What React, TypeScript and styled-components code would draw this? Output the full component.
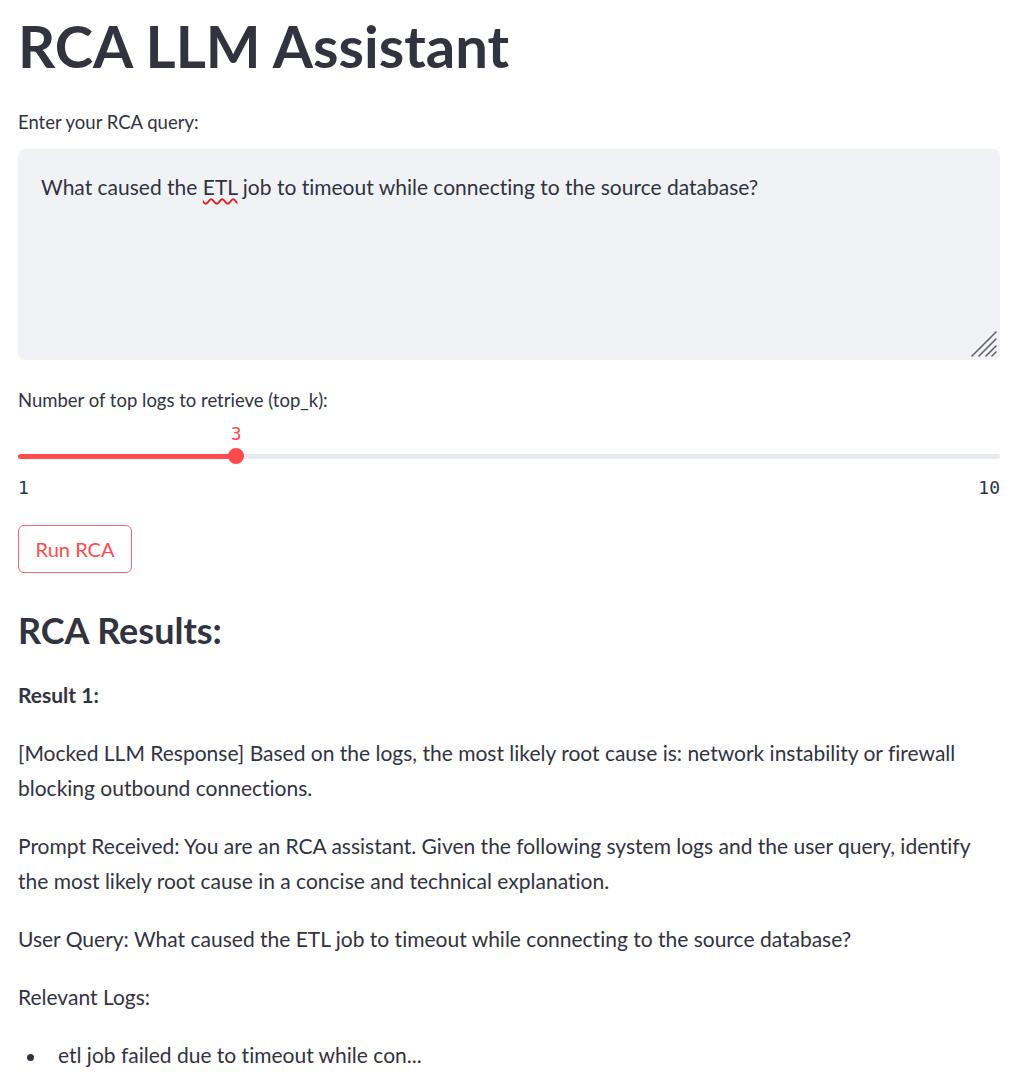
import React from "react";
import styled, { createGlobalStyle } from "styled-components";

const GlobalStyle = createGlobalStyle`
  html, body {
    margin: 0;
    padding: 0;
    background: #ffffff;
  }
  body {
    font-family: "Lato", "Liberation Sans", sans-serif;
    font-variant-ligatures: none;
    font-feature-settings: "liga" 0, "clig" 0;
    color: #31333f;
  }
`;

const Page = styled.main`
  width: 982px;
  padding: 12px 0 0 18px;
  display: flex;
  flex-direction: column;
  align-items: stretch;
`;

const Title = styled.h1`
  margin: 0;
  font-size: 58px;
  line-height: 68px;
  font-weight: 700;
  color: #31333f;
`;

const Field = styled.section<{ $top: number }>`
  display: flex;
  flex-direction: column;
  margin-top: ${(p) => p.$top}px;
`;

const Label = styled.label`
  font-size: 18.5px;
  line-height: 28px;
  color: #31333f;
`;

const TextBox = styled.div`
  position: relative;
  box-sizing: border-box;
  margin-top: 13px;
  height: 211px;
  padding: 21px 23px;
  background: #f0f2f6;
  border-radius: 7px;
  font-size: 21px;
  line-height: 34px;
  color: #31333f;
  outline: none;
`;

const Misspelled = styled.span`
  text-decoration: underline wavy #e0201c;
  text-decoration-thickness: 1.5px;
  text-underline-offset: 3px;
`;

const Grip = styled.svg`
  position: absolute;
  right: 3px;
  bottom: 3px;
  width: 26px;
  height: 26px;
`;

const ValueRow = styled.div`
  position: relative;
  height: 18px;
  margin-top: 11px;
`;

const ThumbValue = styled.span`
  position: absolute;
  top: 0;
  transform: translateX(-50%);
  font-family: "DejaVu Sans Mono", "Liberation Mono", monospace;
  font-size: 18px;
  line-height: 18px;
  color: #ff4b4b;
`;

const TrackArea = styled.div`
  position: relative;
  height: 16px;
  margin-top: 5px;
  display: flex;
  align-items: center;
`;

const Track = styled.div`
  flex: 1;
  height: 5px;
  border-radius: 3px;
  background: #e6e9ef;
  display: flex;
`;

const TrackFill = styled.div`
  height: 100%;
  border-radius: 3px;
  background: #ff4b4b;
`;

const Thumb = styled.div`
  position: absolute;
  top: 0;
  width: 16px;
  height: 16px;
  border-radius: 50%;
  background: #ff4b4b;
  transform: translateX(-50%);
`;

const MinMax = styled.div`
  display: flex;
  justify-content: space-between;
  margin-top: 15px;
  height: 18px;
  font-family: "DejaVu Sans Mono", "Liberation Mono", monospace;
  font-size: 18px;
  line-height: 18px;
  color: #31333f;
`;

const Button = styled.button`
  align-self: flex-start;
  margin-top: 28px;
  box-sizing: border-box;
  width: 114px;
  height: 48px;
  padding: 0;
  display: flex;
  align-items: center;
  justify-content: center;
  background: #ffffff;
  border: 1px solid #f26a6f;
  border-radius: 6px;
  font-family: "Lato", "Liberation Sans", sans-serif;
  font-size: 20px;
  color: #ff4b4b;
  cursor: pointer;
`;

const SectionTitle = styled.h3`
  margin: 36px 0 25px;
  font-size: 36px;
  line-height: 43px;
  font-weight: 700;
  color: #31333f;
`;

const Para = styled.p<{ $bold?: boolean }>`
  margin: 0 0 23px;
  font-size: 21px;
  line-height: 35px;
  font-weight: ${(p) => (p.$bold ? 700 : 400)};
  color: #31333f;
`;

const List = styled.ul`
  margin: 0;
  padding: 0;
  list-style: none;
`;

const Item = styled.li`
  position: relative;
  padding-left: 40px;
  font-size: 21px;
  line-height: 35px;
  color: #31333f;

  &::before {
    content: "";
    position: absolute;
    left: 9px;
    top: 17px;
    width: 7px;
    height: 7px;
    border-radius: 50%;
    background: #31333f;
  }
`;

function Slider({ min, max, value }: { min: number; max: number; value: number }) {
  const pct = ((value - min) / (max - min)) * 100;
  return (
    <>
      <ValueRow>
        <ThumbValue style={{ left: `${pct}%` }}>{value}</ThumbValue>
      </ValueRow>
      <TrackArea>
        <Track>
          <TrackFill style={{ width: `${pct}%` }} />
        </Track>
        <Thumb style={{ left: `${pct}%` }} />
      </TrackArea>
      <MinMax>
        <span>{min}</span>
        <span>{max}</span>
      </MinMax>
    </>
  );
}

export default function App() {
  return (
    <>
      <GlobalStyle />
      <Page>
        <Title>RCA LLM Assistant</Title>

        <Field $top={28}>
          <Label>Enter your RCA query:</Label>
          <TextBox role="textbox" aria-multiline="true" spellCheck={false}>
            What caused the <Misspelled>ETL</Misspelled> job to timeout while connecting to the source database?
            <Grip viewBox="0 0 26 26" aria-hidden="true">
              <g stroke="#5f6068" strokeWidth="1.6" strokeLinecap="round">
                <line x1="1" y1="25" x2="25" y2="1" />
                <line x1="8" y1="25" x2="25" y2="8" />
                <line x1="15" y1="25" x2="25" y2="15" />
                <line x1="21" y1="25" x2="25" y2="21" />
              </g>
            </Grip>
          </TextBox>
        </Field>

        <Field $top={26}>
          <Label>Number of top logs to retrieve (top_k):</Label>
          <Slider min={1} max={10} value={3} />
        </Field>

        <Button type="button">Run RCA</Button>

        <SectionTitle>RCA Results:</SectionTitle>

        <Para $bold>Result 1:</Para>
        <Para>
          [Mocked LLM Response] Based on the logs, the most likely root cause is: network instability or firewall
          blocking outbound connections.
        </Para>
        <Para>
          Prompt Received: You are an RCA assistant. Given the following system logs and the user query, identify
          the most likely root cause in a concise and technical explanation.
        </Para>
        <Para>User Query: What caused the ETL job to timeout while connecting to the source database?</Para>
        <Para>Relevant Logs:</Para>
        <List>
          <Item>etl job failed due to timeout while con...</Item>
        </List>
      </Page>
    </>
  );
}
